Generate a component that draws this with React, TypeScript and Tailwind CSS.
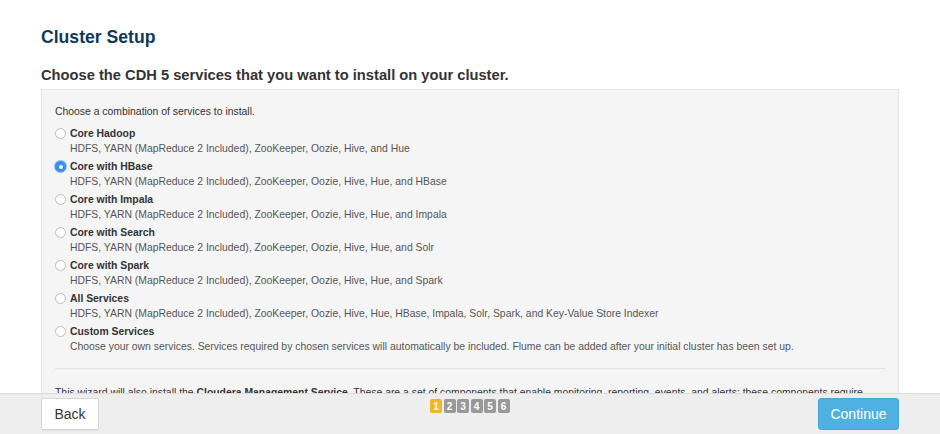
import React from "react";

const options = [
  { title: "Core Hadoop", desc: "HDFS, YARN (MapReduce 2 Included), ZooKeeper, Oozie, Hive, and Hue" },
  { title: "Core with HBase", desc: "HDFS, YARN (MapReduce 2 Included), ZooKeeper, Oozie, Hive, Hue, and HBase", checked: true },
  { title: "Core with Impala", desc: "HDFS, YARN (MapReduce 2 Included), ZooKeeper, Oozie, Hive, Hue, and Impala" },
  { title: "Core with Search", desc: "HDFS, YARN (MapReduce 2 Included), ZooKeeper, Oozie, Hive, Hue, and Solr" },
  { title: "Core with Spark", desc: "HDFS, YARN (MapReduce 2 Included), ZooKeeper, Oozie, Hive, Hue, and Spark" },
  { title: "All Services", desc: "HDFS, YARN (MapReduce 2 Included), ZooKeeper, Oozie, Hive, Hue, HBase, Impala, Solr, Spark, and Key-Value Store Indexer" },
  { title: "Custom Services", desc: "Choose your own services. Services required by chosen services will automatically be included. Flume can be added after your initial cluster has been set up." },
];

function Radio({ checked }: { checked?: boolean }) {
  if (checked) {
    return (
      <span className="mt-[2px] flex h-[11px] w-[11px] shrink-0 items-center justify-center rounded-full bg-[#3b8ef0] shadow-[0_0_0_1px_#8dbcf5]">
        <span className="h-[4px] w-[4px] rounded-full bg-white" />
      </span>
    );
  }
  return <span className="mt-[2px] h-[11px] w-[11px] shrink-0 rounded-full border border-[#bdbdbd] bg-white" />;
}

export default function App() {
  return (
    <div
      className="flex h-[434px] w-full flex-col overflow-hidden bg-white text-[#333]"
      style={{ fontFamily: '"Liberation Sans", Arial, sans-serif' }}
    >
      <main className="min-h-0 flex-1 overflow-hidden px-[41px] pt-[26px]">
        <h1 className="text-[17.6px] font-bold leading-[22px] text-[#10385a]">Cluster Setup</h1>
        <h2 className="mt-[17px] text-[14.7px] font-bold leading-[20px] text-[#333]">
          Choose the CDH 5 services that you want to install on your cluster.
        </h2>
        <div className="mt-[4px] border border-[#e3e3e3] bg-[#f5f5f5] px-[13px] pt-[14px] pb-[20px]">
          <p className="text-[10.4px] leading-[15px] text-[#333]">Choose a combination of services to install.</p>
          <div className="mt-[7px] flex flex-col">
            {options.map((o) => (
              <div key={o.title} className="flex h-[33px] gap-[4px]">
                <Radio checked={o.checked} />
                <div>
                  <div className="text-[10.4px] font-bold leading-[15px] text-[#333]">{o.title}</div>
                  <div className="text-[10.4px] leading-[15px] text-[#555]">{o.desc}</div>
                </div>
              </div>
            ))}
          </div>
          <div className="mt-[11px] border-t border-[#e1e1e1]" />
          <p className="mt-[16px] text-[10.4px] leading-[15px] text-[#333]">
            This wizard will also install the <b>Cloudera Management Service</b>. These are a set of components that enable monitoring, reporting, events, and alerts; these components require
          </p>
        </div>
      </main>
      <footer className="relative flex h-[41px] shrink-0 items-center justify-between border-t border-[#dcdcdc] bg-[#eeeeee] px-[41px]">
        <button className="h-[32px] w-[58px] rounded-[2px] border border-[#d6d6d6] bg-white text-[14px] text-[#333] shadow-[0_1px_1px_rgba(0,0,0,0.05)]">
          Back
        </button>
        <div className="absolute left-[430px] top-[5px] flex gap-[1.5px]">
          {[1, 2, 3, 4, 5, 6].map((n) => (
            <span
              key={n}
              className={
                n === 1
                  ? "flex h-[14px] w-[12px] items-center justify-center rounded-[2px] bg-[#f2b62c] text-[10px] font-bold text-white"
                  : "flex h-[14px] w-[12px] items-center justify-center rounded-[2px] bg-[#999999] text-[10px] font-bold text-white"
              }
            >
              {n}
            </span>
          ))}
        </div>
        <button className="h-[32px] w-[81px] rounded-[3px] border border-[#46a8d6] bg-[#4fb1df] text-[14px] text-white">
          Continue
        </button>
      </footer>
    </div>
  );
}
